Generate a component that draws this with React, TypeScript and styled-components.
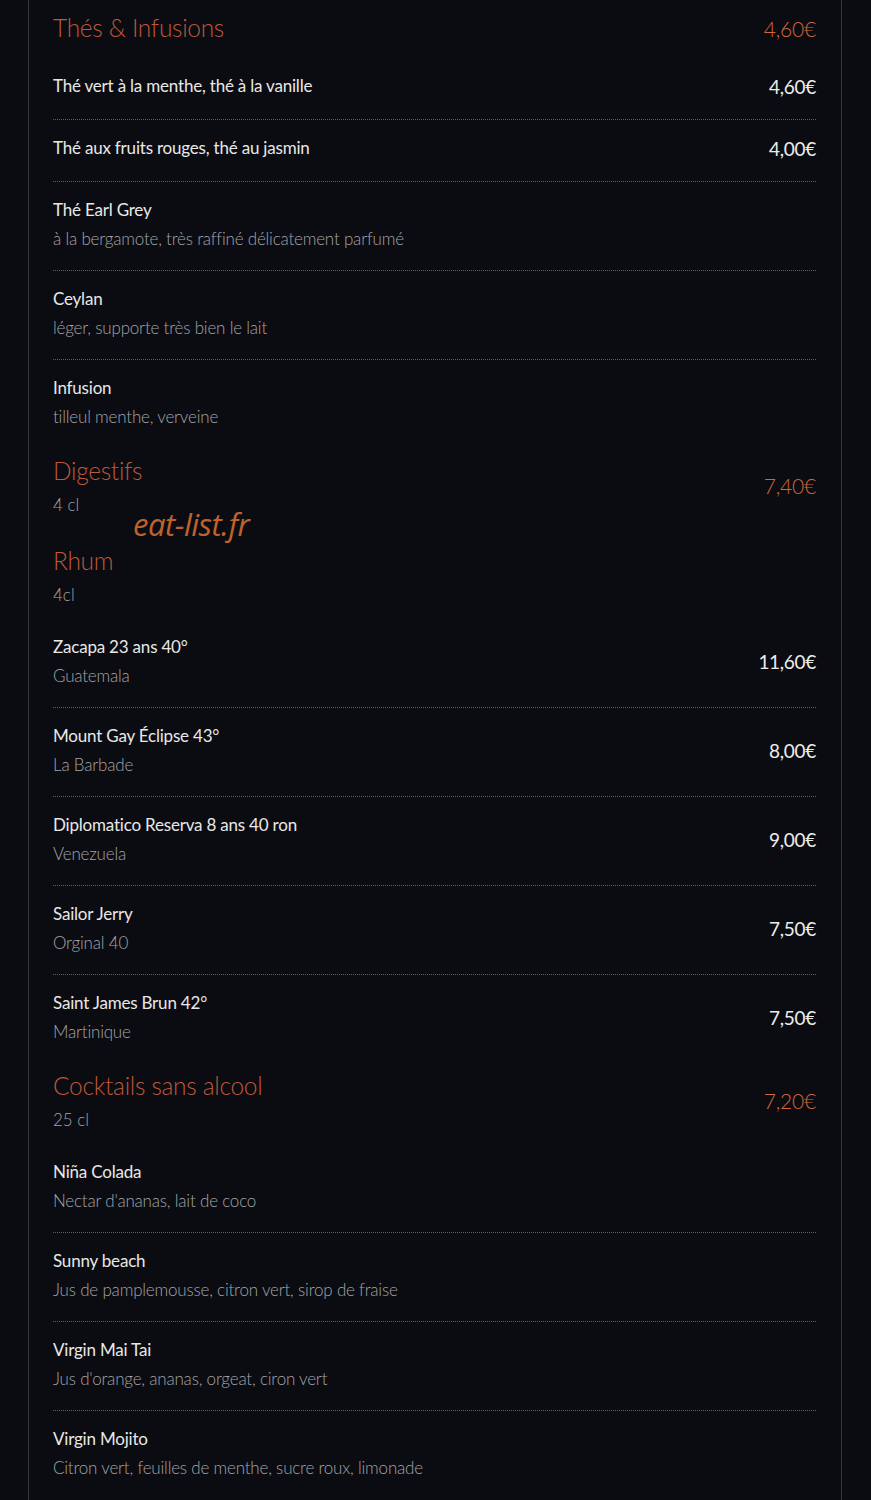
import React from 'react';
import styled, { createGlobalStyle } from 'styled-components';

interface MenuItem {
  name: string;
  desc?: string;
  price?: string;
}

interface MenuSection {
  title: string;
  sub?: string;
  price?: string;
  items: MenuItem[];
}

const sections: MenuSection[] = [
  {
    title: 'Thés & Infusions',
    price: '4,60€',
    items: [
      { name: 'Thé vert à la menthe, thé à la vanille', price: '4,60€' },
      { name: 'Thé aux fruits rouges, thé au jasmin', price: '4,00€' },
      { name: 'Thé Earl Grey', desc: 'à la bergamote, très raffiné délicatement parfumé' },
      { name: 'Ceylan', desc: 'léger, supporte très bien le lait' },
      { name: 'Infusion', desc: 'tilleul menthe, verveine' },
    ],
  },
  { title: 'Digestifs', sub: '4 cl', price: '7,40€', items: [] },
  {
    title: 'Rhum',
    sub: '4cl',
    items: [
      { name: 'Zacapa 23 ans 40°', desc: 'Guatemala', price: '11,60€' },
      { name: 'Mount Gay Éclipse 43°', desc: 'La Barbade', price: '8,00€' },
      { name: 'Diplomatico Reserva 8 ans 40 ron', desc: 'Venezuela', price: '9,00€' },
      { name: 'Sailor Jerry', desc: 'Orginal 40', price: '7,50€' },
      { name: 'Saint James Brun 42°', desc: 'Martinique', price: '7,50€' },
    ],
  },
  {
    title: 'Cocktails sans alcool',
    sub: '25 cl',
    price: '7,20€',
    items: [
      { name: 'Niña Colada', desc: "Nectar d'ananas, lait de coco" },
      { name: 'Sunny beach', desc: 'Jus de pamplemousse, citron vert, sirop de fraise' },
      { name: 'Virgin Mai Tai', desc: "Jus d'orange, ananas, orgeat, ciron vert" },
      { name: 'Virgin Mojito', desc: 'Citron vert, feuilles de menthe, sucre roux, limonade' },
    ],
  },
];

const GlobalStyle = createGlobalStyle`
  html, body {
    margin: 0;
    padding: 0;
    background: #0b0c11;
  }
  body {
    font-family: Lato, "Open Sans", sans-serif;
    color: #e6e6e6;
  }
`;

const Page = styled.div`
  padding: 0 29px 0 28px;
  min-height: 1500px;
`;

const Panel = styled.div`
  position: relative;
  border-left: 1px solid #35363c;
  border-right: 1px solid #35363c;
  padding: 5px 25px 40px 24px;
  min-height: 1500px;
  box-sizing: border-box;
`;

const Section = styled.section<{ $empty?: boolean }>`
  padding-top: 5px;
  padding-bottom: ${(p) => (p.$empty ? '21px' : '0')};
`;

const SectionHead = styled.div<{ $hasItems?: boolean }>`
  display: flex;
  align-items: center;
  justify-content: space-between;
  margin-bottom: ${(p) => (p.$hasItems ? '12px' : '0')};
`;

const HeadText = styled.div`
  display: flex;
  flex-direction: column;
  gap: 4px;
`;

const Title = styled.h2`
  margin: 0;
  font-family: Lato, sans-serif;
  font-weight: 300;
  font-size: 24.5px;
  line-height: 36px;
  letter-spacing: -0.3px;
  color: #bd583b;
`;

const Sub = styled.div`
  font-size: 17px;
  font-weight: 300;
  line-height: 24px;
  color: #a2a2a5;
`;

const HeadPrice = styled.div`
  font-size: 21px;
  font-weight: 300;
  color: #d2663c;
  letter-spacing: -0.2px;
`;

const Item = styled.div<{ $last?: boolean; $single?: boolean }>`
  display: flex;
  align-items: center;
  justify-content: space-between;
  padding: 16px 0 ${(p) => (p.$single ? '21px' : '19px')};
  border-bottom: ${(p) => (p.$last ? 'none' : '1px dotted #5e5f66')};
`;

const ItemText = styled.div`
  display: flex;
  flex-direction: column;
  gap: 5px;
`;

const Name = styled.div`
  font-size: 17px;
  line-height: 24px;
  letter-spacing: -0.2px;
  color: #e8e8e8;
`;

const Desc = styled.div`
  font-size: 17px;
  font-weight: 300;
  line-height: 24px;
  letter-spacing: -0.2px;
  color: #a4a4a8;
`;

const Price = styled.div`
  font-size: 19px;
  letter-spacing: -0.3px;
  color: #ececec;
`;

const Watermark = styled.div`
  position: absolute;
  left: 104px;
  top: 503px;
  font-family: "Open Sans", sans-serif;
  font-style: italic;
  font-size: 31px;
  letter-spacing: -0.5px;
  color: #c0622c;
  pointer-events: none;
`;

export default function App() {
  return (
    <Page>
      <GlobalStyle />
      <Panel>
        {sections.map((s) => (
          <Section key={s.title} $empty={s.items.length === 0}>
            <SectionHead $hasItems={s.items.length > 0}>
              <HeadText>
                <Title>{s.title}</Title>
                {s.sub && <Sub>{s.sub}</Sub>}
              </HeadText>
              {s.price && <HeadPrice>{s.price}</HeadPrice>}
            </SectionHead>
            {s.items.map((it, i) => (
              <Item key={it.name} $last={i === s.items.length - 1} $single={!it.desc}>
                <ItemText>
                  <Name>{it.name}</Name>
                  {it.desc && <Desc>{it.desc}</Desc>}
                </ItemText>
                {it.price && <Price>{it.price}</Price>}
              </Item>
            ))}
          </Section>
        ))}
        <Watermark>eat-list.fr</Watermark>
      </Panel>
    </Page>
  );
}
